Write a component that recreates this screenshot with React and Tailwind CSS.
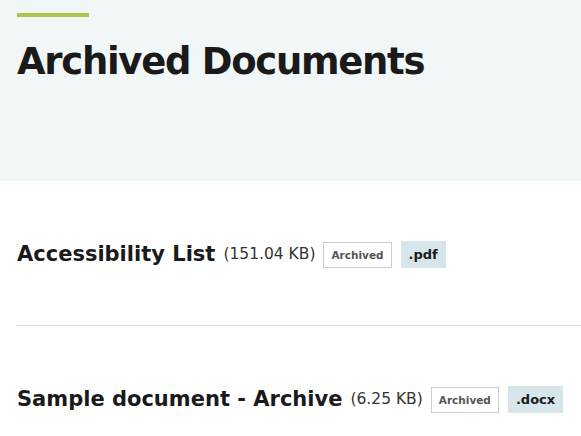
import React from 'react';

const docs = [
  { title: 'Accessibility List', size: '151.04 KB', ext: '.pdf' },
  { title: 'Sample document - Archive', size: '6.25 KB', ext: '.docx' },
];

const DocRow = ({ doc, last }) => (
  <div className={`flex items-center pt-[60px] pb-[57px] ${last ? '' : 'border-b border-[#dcdcdc]'}`}>
    <h3 className="text-[21px] font-bold text-[#1a1a1a] leading-none">{doc.title}</h3>
    <span className="ml-[8px] text-[15.5px] text-[#333] leading-none">({doc.size})</span>
    <span className="ml-[8px] border border-[#ccc] px-[7px] py-[6px] text-[10.5px] font-bold text-[#555] leading-[12px]">
      Archived
    </span>
    <span className="ml-[9px] bg-[#d7e6eb] px-[8px] py-[6px] text-[13px] font-bold text-[#1a1a1a] leading-[15px]">
      {doc.ext}
    </span>
  </div>
);

export default function App() {
  return (
    <div className="w-[581px] h-[436px] overflow-hidden bg-white" style={{ fontFamily: '"DejaVu Sans", sans-serif' }}>
      {/* Header */}
      <div className="h-[181px] bg-[#f1f7f7] px-[17px] pt-[13px]">
        <div className="w-[72px] h-[4px] bg-[#b3c34a]" />
        <h1 className="mt-[26px] text-[37px] font-bold tracking-[-1.3px] text-[#1a1a1a] leading-none">Archived Documents</h1>
      </div>

      {/* List */}
      <div className="pl-[17px]">
        {docs.map((doc, i) => (
          <DocRow key={doc.title} doc={doc} last={i === docs.length - 1} />
        ))}
      </div>
    </div>
  );
}
